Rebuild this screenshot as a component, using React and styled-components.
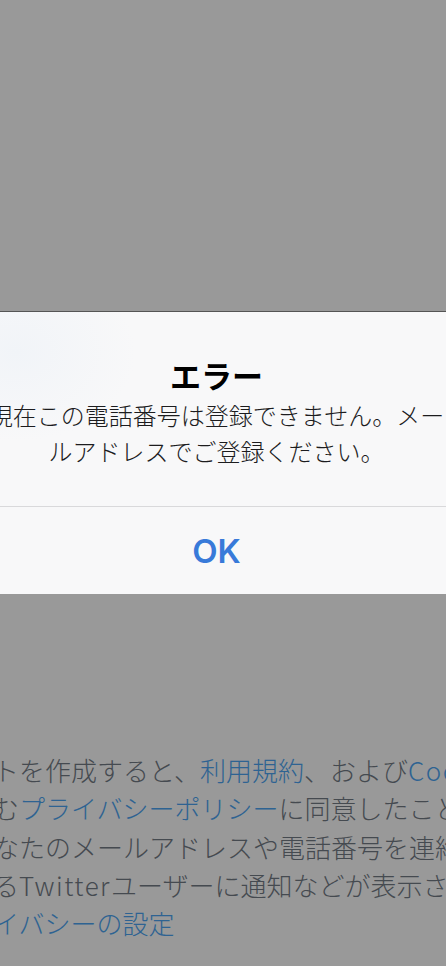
import React from "react";
import styled, { createGlobalStyle } from "styled-components";

const GlobalStyle = createGlobalStyle`
  html, body {
    margin: 0;
    padding: 0;
    background: #999999;
    overflow: hidden;
  }
  body {
    font-family: "Noto Sans CJK JP", "Noto Sans", sans-serif;
  }
`;

const Page = styled.div`
  width: 446px;
  height: 966px;
  display: flex;
  flex-direction: column;
  background: #999999;
  overflow: hidden;
`;

const Backdrop = styled.div`
  height: 311px;
  flex-shrink: 0;
  border-bottom: 1px solid #555555;
`;

const Alert = styled.div`
  width: 481px;
  margin-left: -24px;
  flex-shrink: 0;
  display: flex;
  flex-direction: column;
  background:
    radial-gradient(ellipse 120px 90px at 40px 40px, #f1f4f8 0%, rgba(241, 244, 248, 0) 100%),
    #f8f8f9;
`;

const AlertBody = styled.div`
  padding: 44px 0 37px;
  display: flex;
  flex-direction: column;
  align-items: center;
  border-bottom: 1px solid #d9d9db;
`;

const Title = styled.div`
  font-family: "Noto Sans CJK JP", sans-serif;
  font-size: 31px;
  font-weight: 700;
  line-height: 38px;
  color: #000000;
`;

const Message = styled.div`
  margin-top: 3px;
  font-family: "Noto Sans CJK JP", sans-serif;
  font-size: 24px;
  font-weight: 300;
  line-height: 36px;
  color: #1c1c1e;
  text-align: center;
  white-space: nowrap;
`;

const Button = styled.button`
  height: 87px;
  border: none;
  background: transparent;
  font-family: Inter, "Noto Sans", sans-serif;
  font-size: 33px;
  font-weight: 600;
  color: #387ad9;
  padding: 0;
  cursor: pointer;
`;

const Footer = styled.div`
  margin-top: 157px;
  margin-left: -33px;
  font-family: "Noto Sans CJK JP", sans-serif;
  font-size: 26px;
  font-weight: 300;
  line-height: 38.25px;
  color: #454a50;
`;

const Line = styled.div`
  white-space: nowrap;
`;

const Link = styled.span`
  color: #2e6392;
`;

const Latin = styled.span`
  letter-spacing: 1.5px;
`;

export default function App() {
  return (
    <Page>
      <GlobalStyle />
      <Backdrop />
      <Alert>
        <AlertBody>
          <Title>エラー</Title>
          <Message>
            現在この電話番号は登録できません。メー
            <br />
            ルアドレスでご登録ください。
          </Message>
        </AlertBody>
        <Button>OK</Button>
      </Alert>
      <Footer>
        <Line>
          ントを作成すると、<Link>利用規約</Link>、および
          <Link>
            <Latin>Cookie</Latin>の使用
          </Link>
          を含
        </Line>
        <Line>
          含む<Link>プライバシーポリシー</Link>に同意したことになります。
        </Line>
        <Line>あなたのメールアドレスや電話番号を連絡先に</Line>
        <Line>
          いる<Latin>Twitter</Latin>ユーザーに通知などが表示されます。<Link>プ</Link>
        </Line>
        <Line>
          <Link>ライバシーの設定</Link>
        </Line>
      </Footer>
    </Page>
  );
}
